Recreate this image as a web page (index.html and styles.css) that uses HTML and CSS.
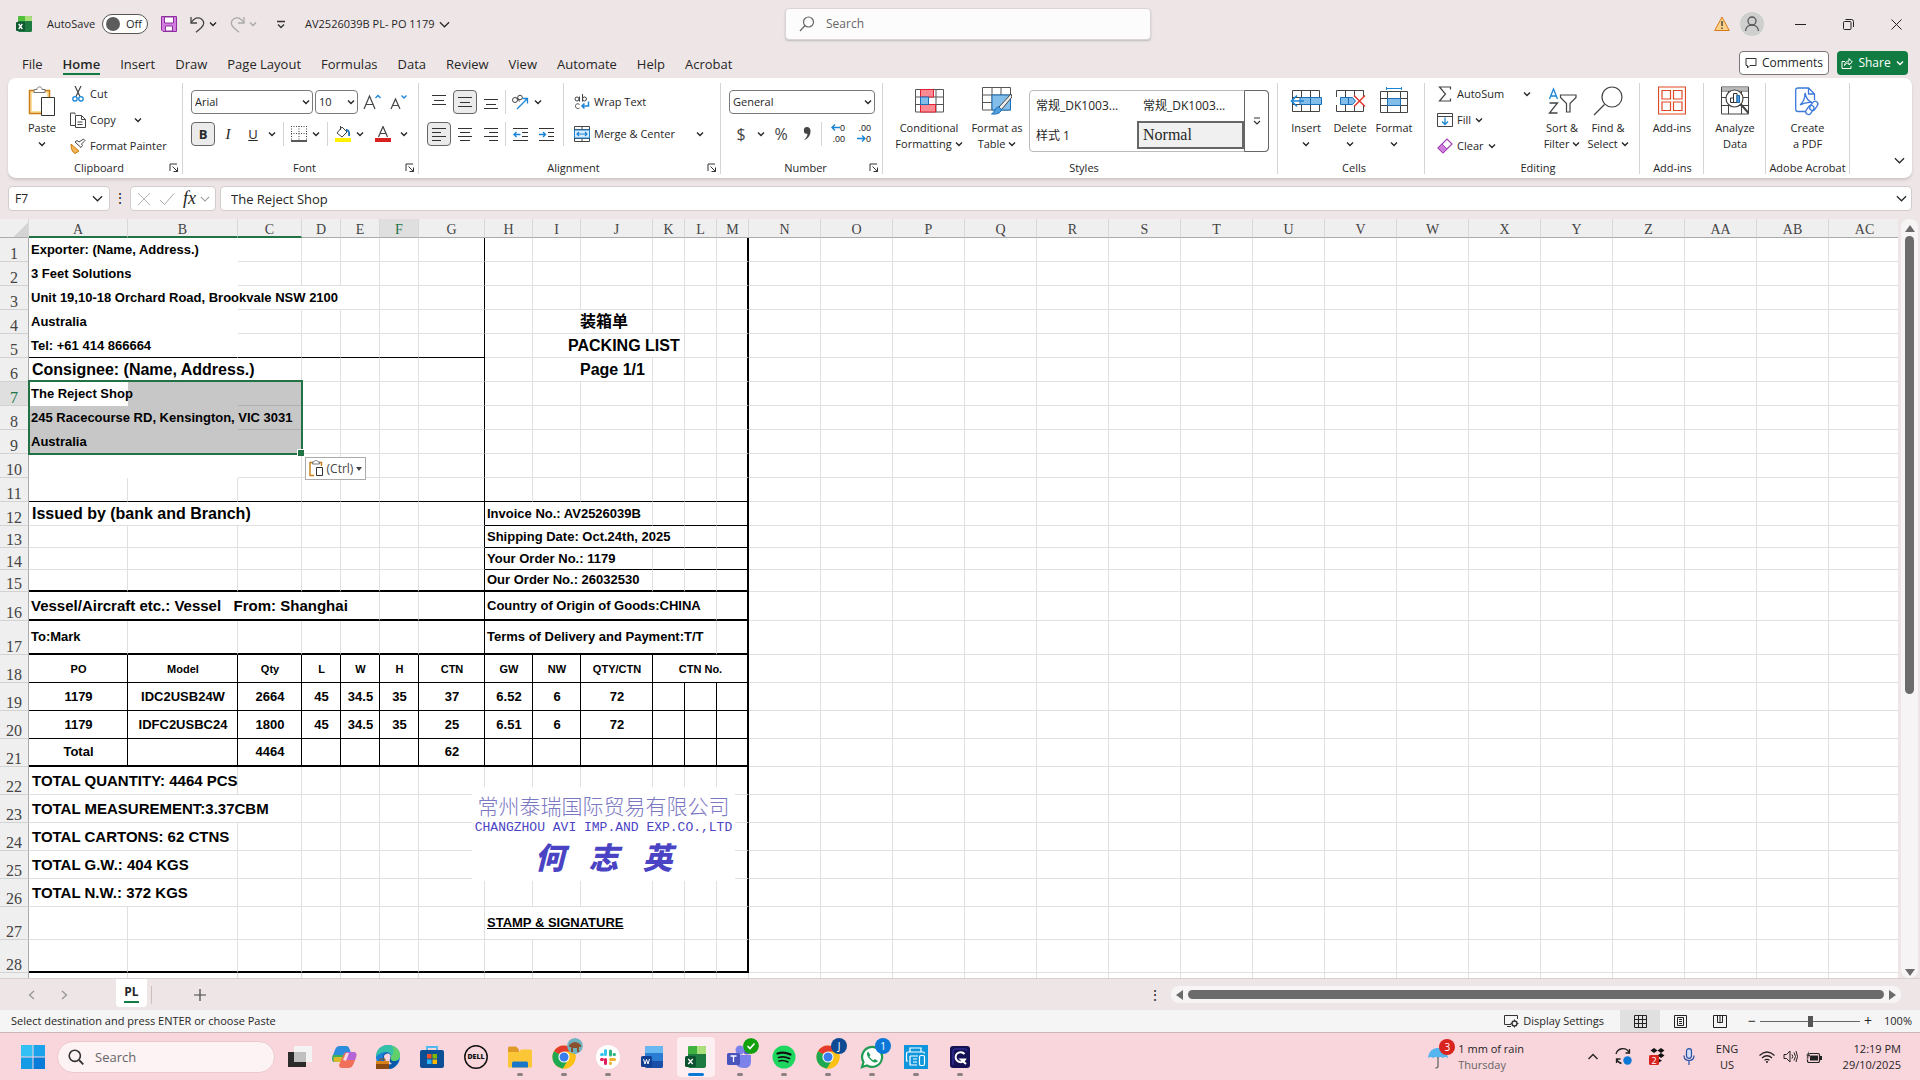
FILE: index.html
```html
<!DOCTYPE html>
<html lang="en">
<head>
<meta charset="utf-8">
<title>AV2526039B PL- PO 1179 - Excel</title>
<link rel="stylesheet" href="styles.css">
</head>
<body>
<svg class="defs" width="0" height="0" aria-hidden="true">
  <symbol id="chev" viewBox="0 0 8 8"><path d="M1 2.5l3 3 3-3" fill="none" stroke="currentColor" stroke-width="1.4"/></symbol>
  <symbol id="chevw" viewBox="0 0 12 12"><path d="M1 3.5l5 5 5-5" fill="none" stroke="currentColor" stroke-width="1.3"/></symbol>
  <symbol id="launch" viewBox="0 0 10 10"><path d="M1 8V1h7M3.500 3.500L8.500 8.500M8.500 4.500v4h-4" fill="none" stroke="#333"/></symbol>
  <symbol id="chrome" viewBox="0 0 24 24"><circle cx="12" cy="12" r="11.500" fill="#fbc116"/><path d="M12 12L2 6.200A11.500 11.500 0 0 1 22 6.300z" fill="#e33b2e"/><path d="M12 12L2 6.200A11.500 11.500 0 0 0 11 23.500l5.500-9z" fill="#1da851"/><path d="M12 6.500h10.100a11.500 11.500 0 0 1-11 17L16.500 14z" fill="#fbc116"/><circle cx="12" cy="12" r="5.600" fill="#fff"/><circle cx="12" cy="12" r="4.500" fill="#3b7ded"/></symbol>
</svg>

<header class="titlebar">
  <div class="quick">
    <svg width="16" height="16" viewBox="0 0 16 16"><rect x="2" y="0" width="14" height="16" rx="1.500" fill="#1d7b41"/><path d="M2 1.500Q2 0 3.500 0H9v5H2z" fill="#52c03d"/><path d="M9 0h5.500Q16 0 16 1.500V5H9z" fill="#a9e07a"/><rect y="6" width="9" height="9" rx="1" fill="#0f5a30"/><path d="M2.700 8l3.600 5M6.300 8l-3.600 5" stroke="#fff" stroke-width="1.300"/></svg>
    <div class="autosave"><label for="autosave">AutoSave</label><span class="toggle"><input type="checkbox" id="autosave"><span class="knob"></span><span>Off</span></span></div>
    <button class="plain" aria-label="Save"><svg width="16" height="16" viewBox="0 0 16 16"><path d="M.5.500h15v15H2l-1.500-1.500z" fill="#d27fe0" stroke="#8e2ea0"/><path d="M3.500 1h9v6h-9zM4.500 10h7v5h-7z" fill="#fff" stroke="#8e2ea0"/></svg></button>
    <button class="plain" aria-label="Undo"><svg width="15" height="17" viewBox="0 0 15 17"><path d="M1 1v6h6M1.200 6.500C4 2 8 .8 11.500 3c3 2.500 3 6-.5 9L6 16.300" fill="none" stroke="#444" stroke-width="1.300"/></svg><svg class="c8"><use href="#chev"/></svg></button>
    <button class="plain dim" aria-label="Redo"><svg width="15" height="17" viewBox="0 0 15 17"><path d="M14 1v6H8M13.800 6.500C11 2 7 .8 3.500 3c-3 2.500-3 6 .5 9L9 16.300" fill="none" stroke="#aaa" stroke-width="1.300"/></svg><svg class="c8"><use href="#chev"/></svg></button>
    <button class="plain cust" aria-label="Customize Quick Access Toolbar"><svg width="8" height="9" viewBox="0 0 8 9"><path d="M0 1.500h8M1 4.500l3 3 3-3" fill="none" stroke="#333" stroke-width="1.300"/></svg></button>
    <button class="plain">AV2526039B PL- PO 1179 <svg width="11" height="11"><use href="#chevw"/></svg></button>
  </div>
  <label class="search"><svg width="16" height="16" viewBox="0 0 16 16"><circle cx="9.500" cy="6" r="5" fill="none" stroke="#666" stroke-width="1.200"/><path d="M6 9.500L1 15" stroke="#666" stroke-width="1.200"/></svg><input type="text" placeholder="Search" aria-label="Search"></label>
  <div class="winctl">
    <svg width="16" height="16" viewBox="0 0 16 16"><path d="M8 1L15.300 14.500H.7z" fill="#fcd28a" stroke="#d97a16"/><path d="M8 5v5M8 11.500v1.500" stroke="#333" stroke-width="1.300"/></svg>
    <svg class="avatar" width="24" height="24" viewBox="0 0 24 24"><circle cx="12" cy="12" r="12" fill="#cfcfcf"/><circle cx="12" cy="9" r="4" fill="none" stroke="#555" stroke-width="1.300"/><path d="M5.500 19c.5-8 12.500-8 13 0" fill="none" stroke="#555" stroke-width="1.300"/></svg>
    <button class="win" aria-label="Minimize"><svg width="11" height="11"><path d="M0 5.500h11" stroke="#222"/></svg></button>
    <button class="win" aria-label="Restore"><svg width="11" height="11" fill="none" stroke="#222"><rect x=".5" y="2.500" width="7.500" height="8" rx="1"/><path d="M2.500.5h6q2 0 2 2V8"/></svg></button>
    <button class="win" aria-label="Close"><svg width="11" height="11"><path d="M.5.500l10 10M10.500.500l-10 10" stroke="#222"/></svg></button>
  </div>
</header>

<nav class="tabs">
  <a href="#">File</a><a href="#" class="on">Home</a><a href="#">Insert</a><a href="#">Draw</a><a href="#">Page Layout</a><a href="#">Formulas</a><a href="#">Data</a><a href="#">Review</a><a href="#">View</a><a href="#">Automate</a><a href="#">Help</a><a href="#">Acrobat</a>
  <button class="comments"><svg width="12" height="12" viewBox="0 0 12 12"><path d="M1 1.500h10v7H5l-2.500 2.500V8.500H1z" fill="none" stroke="#333"/></svg>Comments</button>
  <button class="share"><svg width="12" height="13" viewBox="0 0 12 13"><path d="M4 4.500H1v7h9V9M3.500 8.500c.5-3 2-4.500 4.500-4.500V1.500L11.300 5 8 8V6c-2 0-3.500.800-4.500 2.500z" fill="none" stroke="#fff"/></svg>Share<svg class="c8"><use href="#chev"/></svg></button>
</nav>

<section class="ribbon">
  <div class="group g-clip">
    <div class="tools">
      <button class="big"><svg width="28" height="30" viewBox="0 0 28 30"><path d="M1.500 4.500h20v23h-20z" fill="#fbdd9c" stroke="#c97d12" stroke-width="1.500"/><path d="M4 7h15v18H4z" fill="#fff"/><path d="M6 6.500v-3h3c0-3.500 5-3.500 5 0h3v3z" fill="#fff" stroke="#777"/><path d="M13.500 11.500h13v18h-13z" fill="#fff" stroke="#333"/></svg><span>Paste</span><svg class="c8"><use href="#chev"/></svg></button>
      <div class="rows3">
        <button class="row"><svg width="16" height="16" viewBox="0 0 16 16"><path d="M5 0l5 10.500M11 0L6 10.500" stroke="#444" stroke-width="1.200"/><circle cx="5" cy="12.800" r="2.200" fill="none" stroke="#1a85d6" stroke-width="1.300"/><circle cx="11" cy="12.800" r="2.200" fill="none" stroke="#1a85d6" stroke-width="1.300"/></svg>Cut</button>
        <button class="row"><svg width="16" height="16" viewBox="0 0 16 16"><path d="M5 2.500V1H.5v12.500H5M5.500 3.500h6l4 4v8h-10zM11.500 3.500v4h4M7.500 10h5M7.500 12.500h5" fill="none" stroke="#444"/></svg>Copy<svg class="c8 far"><use href="#chev"/></svg></button>
        <button class="row"><svg width="16" height="16" viewBox="0 0 16 16"><path d="M1 6l8 7-4 2.500c-3-1.500-4-5-4-9.500z" fill="#f5b65a" stroke="#c97d12"/><path d="M5 4l6 5.500 1.500-2-1-1.500L15 2.500 13.500 1 9 4 7 2.500z" fill="#fff" stroke="#444"/></svg>Format Painter</button>
      </div>
    </div>
    <div class="cap">Clipboard<svg class="l"><use href="#launch"/></svg></div>
  </div>

  <div class="group g-font">
    <div class="tools rows2">
      <div class="line">
        <span class="combo w-name"><select aria-label="Font"><option>Arial</option></select><svg class="c8"><use href="#chev"/></svg></span>
        <span class="combo w-size"><select aria-label="Font size"><option>10</option></select><svg class="c8"><use href="#chev"/></svg></span>
        <button class="ib" aria-label="Increase font size"><svg width="18" height="16" viewBox="0 0 18 16"><path d="M1 15L6.500 2 12 15M3 10.500h7" fill="none" stroke="#444" stroke-width="1.200"/><path d="M12.500 4l2.500-2.500L17.500 4" fill="none" stroke="#1a85d6" stroke-width="1.300"/></svg></button>
        <button class="ib" aria-label="Decrease font size"><svg width="18" height="16" viewBox="0 0 18 16"><path d="M2 15l4.500-10L11 15M3.500 11.500h6" fill="none" stroke="#444" stroke-width="1.200"/><path d="M12.500 1.500L15 4l2.500-2.500" fill="none" stroke="#1a85d6" stroke-width="1.300"/></svg></button>
      </div>
      <div class="line tight">
        <button class="ib on" aria-label="Bold"><b>B</b></button>
        <button class="ib" aria-label="Italic"><i>I</i></button>
        <button class="ib" aria-label="Underline"><u>U</u></button><svg class="c8 m"><use href="#chev"/></svg>
        <span class="sep"></span>
        <button class="ib s" aria-label="Borders"><svg width="16" height="16" viewBox="0 0 16 16"><path d="M.5 0v14M8 0v14M15.500 0v14M0 .5h16M0 7.500h16" stroke="#444" stroke-dasharray="1 1.500" fill="none"/><path d="M0 15h16" stroke="#222" stroke-width="1.500"/></svg></button><svg class="c8 m"><use href="#chev"/></svg>
        <span class="sep"></span>
        <button class="ib s" aria-label="Fill color"><svg width="16" height="16" viewBox="0 0 16 16"><path d="M7 1L2 7l5 4 5-5zM5.500 0v4" fill="none" stroke="#444"/><path d="M11 4c3 0 3.500 3 3 6" fill="none" stroke="#1a6fb8" stroke-width="1.800"/><path d="M0 12h16v4H0z" fill="#fff100"/></svg></button><svg class="c8 m"><use href="#chev"/></svg>
        <button class="ib wide" aria-label="Font color"><svg width="16" height="16" viewBox="0 0 16 16"><path d="M3.500 11L8 0.500 12.500 11M5 7.500h6" fill="none" stroke="#444" stroke-width="1.200"/><path d="M0 12h16v4H0z" fill="#d8201f"/></svg></button><svg class="c8"><use href="#chev"/></svg>
      </div>
    </div>
    <div class="cap">Font<svg class="l"><use href="#launch"/></svg></div>
  </div>

  <div class="group g-align">
    <div class="tools">
      <div class="rows2">
        <div class="line">
          <button class="ib" aria-label="Top align"><svg width="14" height="14"><path d="M0 .5h14M2 5.500h10M0 9.500h14" stroke="#333"/></svg></button>
          <button class="ib on" aria-label="Middle align"><svg width="14" height="14"><path d="M0 2.500h14M2 7.500h10M0 11.500h14" stroke="#333"/></svg></button>
          <button class="ib" aria-label="Bottom align"><svg width="14" height="14"><path d="M0 4.500h14M2 9.500h10M0 13.500h14" stroke="#333"/></svg></button>
          <span class="sep z"></span>
          <button class="ib" aria-label="Orientation"><svg width="18" height="16" viewBox="0 0 18 16"><circle cx="4" cy="6" r="2.500" fill="none" stroke="#444"/><path d="M6 3.500l2.500 4" stroke="#444"/><circle cx="9" cy="3.500" r="2.300" fill="none" stroke="#444"/><path d="M6 15L16 5M11.500 4.500H16.500V9.500" fill="none" stroke="#1a85d6" stroke-width="1.300"/></svg></button><svg class="c8"><use href="#chev"/></svg>
        </div>
        <div class="line">
          <button class="ib on" aria-label="Align left"><svg width="14" height="14"><path d="M0 1.500h14M0 5.500h9M0 9.500h14M0 13.500h9" stroke="#333"/></svg></button>
          <button class="ib" aria-label="Center"><svg width="14" height="14"><path d="M0 1.500h14M2 5.500h10M0 9.500h14M2 13.500h10" stroke="#333"/></svg></button>
          <button class="ib" aria-label="Align right"><svg width="14" height="14"><path d="M0 1.500h14M5 5.500h9M0 9.500h14M5 13.500h9" stroke="#333"/></svg></button>
          <span class="sep z"></span>
          <button class="ib" aria-label="Decrease indent"><svg width="15" height="14"><path d="M0 1.500h15M9 5.500h6M9 9.500h6M0 13.500h15" stroke="#333"/><path d="M7.500 7.500H1M3.500 5L1 7.500 3.500 10" fill="none" stroke="#1a85d6" stroke-width="1.400"/></svg></button>
          <button class="ib" aria-label="Increase indent"><svg width="15" height="14"><path d="M0 1.500h15M9 5.500h6M9 9.500h6M0 13.500h15" stroke="#333"/><path d="M0 7.500h6.500M4 5l2.500 2.500L4 10" fill="none" stroke="#1a85d6" stroke-width="1.400"/></svg></button>
        </div>
      </div>
      <div class="rows2 wrapcol">
        <button class="row"><svg width="16" height="16" viewBox="0 0 16 16"><g fill="none" stroke="#444"><circle cx="3" cy="5" r="2"/><path d="M5.500 2.500V7.500M8.500 0v7.500"/><circle cx="10.500" cy="5" r="2"/><path d="M5.500 10.500c-2-1.500-4-.5-4 1.500s2 3.500 4 2"/></g><path d="M14.500 7.500v4.500H8M10.500 9.500L8 12l2.500 2.500" fill="none" stroke="#1a85d6" stroke-width="1.500"/></svg>Wrap Text</button>
        <button class="row"><svg width="16" height="16" viewBox="0 0 16 16"><path d="M.5.500h15v15H.5zM.5 3.500h15M.5 12.500h15M8 .5v3M8 12.500v3" fill="#fff" stroke="#444"/><path d="M.5 4h15v8H.5z" fill="#d9ebfa" stroke="#1a85d6"/><path d="M3 8h10M5 6L3 8l2 2M11 6l2 2-2 2" fill="none" stroke="#1a85d6" stroke-width="1.200"/></svg>Merge &amp; Center<svg class="c8 end"><use href="#chev"/></svg></button>
      </div>
    </div>
    <div class="cap">Alignment<svg class="l"><use href="#launch"/></svg></div>
  </div>

  <div class="group g-num">
    <div class="tools rows2">
      <div class="line"><span class="combo w-num"><select aria-label="Number format"><option>General</option></select><svg class="c8"><use href="#chev"/></svg></span></div>
      <div class="line">
        <button class="ib sym">$</button><svg class="c8 m"><use href="#chev"/></svg>
        <button class="ib sym">%</button>
        <button class="ib" aria-label="Comma style"><svg width="8" height="14" viewBox="0 0 8 14"><path d="M4 0a3.400 3.400 0 1 0 .5 6.800C4.200 9.500 3 11.500.8 13.300 5.500 11.500 7.700 8 7.500 3.500 7.300 1.500 6 0 4 0z" fill="#444"/></svg></button>
        <span class="sep z"></span>
        <button class="ib dec" aria-label="Increase decimal"><span><svg width="9" height="7"><path d="M9 3.500H1M4 .5l-3 3 3 3" fill="none" stroke="#1a85d6" stroke-width="1.400"/></svg>0</span><span>.00</span></button>
        <button class="ib dec" aria-label="Decrease decimal"><span>.00</span><span><svg width="9" height="7"><path d="M0 3.500h8M5 .5l3 3-3 3" fill="none" stroke="#1a85d6" stroke-width="1.400"/></svg>0</span></button>
      </div>
    </div>
    <div class="cap">Number<svg class="l"><use href="#launch"/></svg></div>
  </div>

  <div class="group g-styles">
    <div class="tools">
      <button class="big w76"><svg width="29" height="24" viewBox="0 0 29 24"><path d="M.5.500h28v22.500H.5zM.5 8h28M.5 15.500h28M21 .5V23" fill="#fff" stroke="#555"/><path d="M5.500.500h13V8h-13zM5.500 15.500h15V23h-15z" fill="#fb8a93" stroke="#e02030"/><path d="M5.500 8h8v7.500h-8z" fill="#83bdea" stroke="#1a70b8"/></svg><span>Conditional<br>Formatting <svg class="c8"><use href="#chev"/></svg></span></button>
      <button class="big w60"><svg width="30" height="28" viewBox="0 0 30 28"><path d="M.5.500h28v22.500H.5zM.5 8h28M.5 15.500h28M10 .5V23M19 .5V23" fill="#fff" stroke="#555"/><path d="M10 8h18.500v15H10z" fill="#83bdea" stroke="#1a70b8"/><path d="M29 7L17 20l2.500 2.500L30 10z" fill="#eee" stroke="#444"/><path d="M16.500 19.500l3 3c-1 4-5 5-10 4.500 3-1 3-6 7-7.500z" fill="#4f9fe0" stroke="#1a70b8"/></svg><span>Format as<br>Table <svg class="c8"><use href="#chev"/></svg></span></button>
      <div class="gallery">
        <button>常规_DK1003...</button><button>常规_DK1003...</button>
        <button>样式 1</button><button class="cur">Normal</button>
        <button class="more" aria-label="More styles"><svg width="8" height="9" viewBox="0 0 8 9"><path d="M1 1h6M1 4l3 3 3-3" fill="none" stroke="#333" stroke-width="1.200"/></svg></button>
      </div>
    </div>
    <div class="cap">Styles</div>
  </div>

  <div class="group g-cells">
    <div class="tools">
      <button class="big w44"><svg width="32" height="28" viewBox="0 0 32 28"><path d="M2.500 3.500h27v21h-27zM11.500 3.500v21M20.500 3.500v21M2.500 10.500h27M2.500 17.500h27" fill="#fff" stroke="#444"/><path d="M10 10.500h21.500v7H10zM20.500 10.500v7" fill="#83bdea" stroke="#1a6fb8"/><path d="M14 14H1.500M7 8.500L1.500 14 7 19.500" fill="none" stroke="#1a85d6" stroke-width="1.600"/></svg><span>Insert</span><svg class="c8"><use href="#chev"/></svg></button>
      <button class="big w44"><svg width="32" height="28" viewBox="0 0 32 28"><path d="M2.500 3.500h27v21h-27zM11.500 3.500v21M20.500 3.500v21M2.500 10.500h27M2.500 17.500h27" fill="#fff" stroke="#444"/><path d="M0 10h32v8H0z" fill="#fff"/><path d="M6.500 10.500h12l3 3.500-3 3.500h-12zM14.500 10.500v7" fill="#83bdea" stroke="#1a6fb8"/><path d="M20 8.500l11 11M31 8.500l-11 11" stroke="#e0382c" stroke-width="1.500"/></svg><span>Delete</span><svg class="c8"><use href="#chev"/></svg></button>
      <button class="big w44"><svg width="30" height="28" viewBox="0 0 30 28"><path d="M1.500 4.500h27v21h-27zM8.500 4.500v21M21.500 4.500v21M1.500 11.500h27M1.500 18.500h27" fill="#fff" stroke="#444"/><path d="M8.500 11.500h13v7h-13z" fill="#83bdea" stroke="#1a6fb8"/><path d="M7.500 0v3M22.500 0v3M7.500 1.500h15" stroke="#1a85d6"/></svg><span>Format</span><svg class="c8"><use href="#chev"/></svg></button>
    </div>
    <div class="cap">Cells</div>
  </div>

  <div class="group g-edit">
    <div class="tools">
      <div class="rows3">
        <button class="row"><svg width="16" height="16" viewBox="0 0 16 16"><path d="M13.500 3.500V1h-11l6 7-6 7h11v-2.500" fill="none" stroke="#444" stroke-width="1.200"/></svg>AutoSum<svg class="c8 end"><use href="#chev"/></svg></button>
        <button class="row"><svg width="16" height="16" viewBox="0 0 16 16"><path d="M.5 1.500h15v13H.5zM.5 4.500h15" fill="none" stroke="#444"/><path d="M8 5.500v7M5 9.500l3 3 3-3" fill="none" stroke="#1a85d6" stroke-width="1.300"/></svg>Fill <svg class="c8"><use href="#chev"/></svg></button>
        <button class="row"><svg width="16" height="16" viewBox="0 0 16 16"><path d="M1 10L10 1l5 5-9 9z" fill="#fff" stroke="#a03db3" stroke-width="1.200"/><path d="M1 10l4-4 5 5-4 4z" fill="#cf7ede" stroke="#a03db3"/></svg>Clear <svg class="c8"><use href="#chev"/></svg></button>
      </div>
      <button class="big w46"><svg width="29" height="28" viewBox="0 0 29 28"><path d="M1.500 12L5.500 2l4 10M3 9h5" fill="none" stroke="#1a85d6" stroke-width="1.300"/><path d="M1.500 16h8l-8 10h8" fill="none" stroke="#444" stroke-width="1.300"/><path d="M12.500 8h15.500v2.500L22 16.500V25h-3.500v-8.500l-6-6z" fill="none" stroke="#444" stroke-width="1.200"/></svg><span>Sort &amp;<br>Filter <svg class="c8"><use href="#chev"/></svg></span></button>
      <button class="big w46"><svg width="30" height="30" viewBox="0 0 30 30"><circle cx="19" cy="11" r="10" fill="none" stroke="#444" stroke-width="1.200"/><path d="M11.500 18.500L1 29" stroke="#444" stroke-width="1.300"/></svg><span>Find &amp;<br>Select <svg class="c8"><use href="#chev"/></svg></span></button>
    </div>
    <div class="cap">Editing</div>
  </div>

  <div class="group g-add">
    <div class="tools"><button class="big w60"><svg width="28" height="29" viewBox="0 0 28 29"><path d="M.5.500h27v27H.5zM4 4h8.500v8.500H4zM15.500 4H24v8.500h-8.500zM4 15.500h8.500V24H4zM15.500 15.500H24V24h-8.500z" fill="none" stroke="#df4a22" stroke-width="1.200"/></svg><span>Add-ins</span></button></div>
    <div class="cap">Add-ins</div>
  </div>
  <div class="group g-ana">
    <div class="tools"><button class="big w60"><svg width="28" height="29" viewBox="0 0 28 29"><path d="M.5.500h27v27H.5zM.5 4.500h27M.5 11h27M.5 19h27M7.500 4.500v23M20.500 4.500v23" fill="#fff" stroke="#444"/><path d="M1 1h26v3H1z" fill="#bbb"/><circle cx="13.500" cy="12" r="8.500" fill="#fff" stroke="#444" stroke-width="1.200"/><path d="M20 18l7.500 8.500" stroke="#444" stroke-width="2"/><path d="M9.500 11.500h3V16h-3zM12.500 7h3.500v9h-3.500z" fill="#fff" stroke="#333"/><path d="M16 9h2.500v7H16z" fill="#4f9fe0" stroke="#1a6fb8"/></svg><span>Analyze<br>Data</span></button></div>
  </div>
  <div class="group g-acro">
    <div class="tools"><button class="big w76"><svg width="26" height="30" viewBox="0 0 26 30" fill="none" stroke="#3b78dc" stroke-width="1.300"><path d="M10 25.500H3q-2.300 0-2.300-2.300V4Q.7 2 3 2h10.500l6 6v6M13.500 2v6h6"/><path d="M5 19c4-3 5-8 5-12 1 5 3 8 7 9.500-4-.5-8 .3-12 2.500z"/><rect x="16" y="15" width="5.500" height="10" rx="2.700" transform="rotate(35 19 20)"/><rect x="12" y="19" width="5.500" height="10" rx="2.700" transform="rotate(35 15 24)"/></svg><span>Create<br>a PDF</span></button></div>
    <div class="cap">Adobe Acrobat</div>
  </div>
  <button class="collapse" aria-label="Collapse ribbon"><svg width="11" height="11"><use href="#chevw"/></svg></button>
</section>

<div class="formula">
  <label class="namebox"><input type="text" value="F7" aria-label="Name box"><svg width="11" height="11"><use href="#chevw"/></svg></label>
  <span class="dots">⋮</span>
  <div class="fx"><svg width="14" height="14"><path d="M1 1l12 12M13 1L1 13" stroke="#b5b5b5"/></svg><svg width="16" height="14"><path d="M1 8l4.500 4.500L15 1.500" fill="none" stroke="#aaa"/></svg><i>fx</i><svg class="g" width="10" height="10"><use href="#chevw"/></svg></div>
  <label class="fbar"><input type="text" value="The Reject Shop" aria-label="Formula bar"><svg width="11" height="11"><use href="#chevw"/></svg></label>
</div>

<main class="sheet">
<div class="grid">
<table>
<colgroup><col class="k29"><col class="k99"><col class="k110"><col class="k64"><col class="k39"><col class="k39"><col class="k39"><col class="k66"><col class="k48"><col class="k48"><col class="k72"><col class="k32"><col class="k32"><col class="k32"><col span="16" class="k72"></colgroup>
<thead><tr><th class="corner"><th class="s">A<th class="s">B<th class="s">C<th>D<th>E<th class="act">F<th>G<th>H<th>I<th>J<th>K<th>L<th>M<th>N<th>O<th>P<th>Q<th>R<th>S<th>T<th>U<th>V<th>W<th>X<th>Y<th>Z<th>AA<th>AB<th>AC</tr></thead>
<tbody>
<tr><th>1<td colspan="2" class="m">Exporter: (Name, Address.)<td><td><td><td><td class="R"><td><td><td><td><td><td class="E"><td colspan="16" class="f"></tr>
<tr><th>2<td colspan="2" class="m">3 Feet Solutions<td><td><td><td><td class="R"><td><td><td><td><td><td class="E"><td colspan="16" class="f"></tr>
<tr><th>3<td colspan="2" class="m">Unit 19,10-18 Orchard Road, Brookvale NSW 2100<td class="nr"><td class="nr"><td><td><td class="R"><td><td><td><td><td><td class="E"><td colspan="16" class="f"></tr>
<tr><th>4<td colspan="2" class="m">Australia<td><td><td><td><td class="R"><td><td colspan="2" class="t16 in48">装箱单<td><td><td class="E"><td colspan="16" class="f"></tr>
<tr class="b1"><th>5<td colspan="2" class="m">Tel: +61 414 866664<td><td><td><td><td class="R"><td class="w"><td colspan="3" class="w t16 in36">PACKING LIST<td class="w"><td class="w E"><td colspan="16" class="f"></tr>
<tr><th>6<td colspan="3" class="t16">Consignee: (Name, Address.)<td><td><td><td class="R"><td><td colspan="2" class="t16 in48">Page 1/1<td><td><td class="E"><td colspan="16" class="f"></tr>
<tr><th class="act">7<td class="m">The Reject Shop<td class="m x"><td class="x"><td><td><td><td class="R"><td><td><td><td><td><td class="E"><td colspan="16" class="f"></tr>
<tr><th>8<td colspan="2" class="m x">245 Racecourse RD, Kensington, VIC 3031<td class="x"><td><td><td><td class="R"><td><td><td><td><td><td class="E"><td colspan="16" class="f"></tr>
<tr><th>9<td colspan="2" class="m x">Australia<td class="x"><td><td><td><td class="R"><td><td><td><td><td><td class="E"><td colspan="16" class="f"></tr>
<tr><th>10<td colspan="2" class="m"><td><td><td><td><td class="R"><td><td><td><td><td><td class="E"><td colspan="16" class="f"></tr>
<tr class="b1"><th>11<td><td><td><td><td><td><td class="R"><td><td><td><td><td><td class="E"><td colspan="16" class="f"></tr>
<tr><th>12<td colspan="3" class="t16">Issued by (bank and Branch)<td><td><td><td class="R"><td colspan="3" class="k">Invoice No.: AV2526039B<td class="k"><td class="k"><td class="k E"><td colspan="16" class="f"></tr>
<tr class="h22"><th>13<td><td><td><td><td><td><td class="R"><td colspan="4" class="k">Shipping Date: Oct.24th, 2025<td class="k"><td class="k E"><td colspan="16" class="f"></tr>
<tr class="h22"><th>14<td><td><td><td><td><td><td class="R"><td colspan="3" class="k">Your Order No.: 1179<td class="k"><td class="k"><td class="k E"><td colspan="16" class="f"></tr>
<tr class="h22 b2"><th>15<td><td><td><td><td><td><td class="R"><td colspan="3">Our Order No.: 26032530<td><td><td class="E"><td colspan="16" class="f"></tr>
<tr class="h29 b2"><th>16<td colspan="5" class="t15 pre">Vessel/Aircraft etc.: Vessel   From: Shanghai<td><td class="R"><td colspan="5">Country of Origin of Goods:CHINA<td class="E"><td colspan="16" class="f"></tr>
<tr class="h34 b2"><th>17<td>To:Mark<td><td><td><td><td><td class="R"><td colspan="5">Terms of Delivery and Payment:T/T<td class="E"><td colspan="16" class="f"></tr>
<tr class="h28 q t11"><th>18<td>PO<td>Model<td>Qty<td>L<td>W<td>H<td>CTN<td>GW<td>NW<td>QTY/CTN<td colspan="3" class="E">CTN No.<td colspan="16" class="f"></tr>
<tr class="h28 q"><th>19<td>1179<td>IDC2USB24W<td>2664<td>45<td>34.5<td>35<td>37<td>6.52<td>6<td>72<td><td><td class="E"><td colspan="16" class="f"></tr>
<tr class="h28 q"><th>20<td>1179<td>IDFC2USBC24<td>1800<td>45<td>34.5<td>35<td>25<td>6.51<td>6<td>72<td><td><td class="E"><td colspan="16" class="f"></tr>
<tr class="h28 q b2"><th>21<td>Total<td><td>4464<td><td><td><td>62<td><td><td><td><td><td class="E"><td colspan="16" class="f"></tr>
<tr class="h28"><th>22<td colspan="2" class="t15">TOTAL QUANTITY: 4464 PCS<td><td><td><td><td><td><td><td><td><td><td class="E"><td colspan="16" class="f"></tr>
<tr class="h28"><th>23<td colspan="3" class="t15">TOTAL MEASUREMENT:3.37CBM<td><td><td><td><td><td><td><td><td><td class="E"><td colspan="16" class="f"></tr>
<tr class="h28"><th>24<td colspan="2" class="t15">TOTAL CARTONS: 62 CTNS<td><td><td><td><td><td><td><td><td><td><td class="E"><td colspan="16" class="f"></tr>
<tr class="h28"><th>25<td colspan="2" class="t15">TOTAL G.W.: 404 KGS<td><td><td><td><td><td><td><td><td><td><td class="E"><td colspan="16" class="f"></tr>
<tr class="h28"><th>26<td colspan="2" class="t15">TOTAL N.W.: 372 KGS<td><td><td><td><td><td><td><td><td><td><td class="E"><td colspan="16" class="f"></tr>
<tr class="h33"><th>27<td><td><td><td><td><td><td><td colspan="3"><u>STAMP &amp; SIGNATURE</u><td><td><td class="E"><td colspan="16" class="f"></tr>
<tr class="h33 b2"><th>28<td><td><td><td><td><td><td><td><td><td><td><td><td class="E"><td colspan="16" class="f"></tr>
<tr><th><td><td><td><td><td><td><td><td><td><td><td><td><td><td colspan="16" class="f"></tr>
</tbody>
</table>
<div class="selection"></div>
<button class="pasteopt"><svg width="15" height="17" viewBox="0 0 15 17"><path d="M5 15.500H1v-13h3M10 2.500h2.500V6" fill="none" stroke="#c97d12" stroke-width="1.400"/><path d="M3.500 4V2H5c0-2 4-2 4 0h1.500v2z" fill="#fff" stroke="#777"/><path d="M7.500 7.500h6v8h-6z" fill="#fff" stroke="#333"/></svg>(Ctrl)<svg width="6" height="4"><path d="M0 0h6L3 4z" fill="#444"/></svg></button>
<div class="stamp"><p class="cn">常州泰瑞国际贸易有限公司</p><p class="en">CHANGZHOU AVI IMP.AND EXP.CO.,LTD</p><p class="sig"><span>何</span><span>志</span><span>英</span></p></div>
</div>
<div class="vscroll"><svg width="10" height="7"><path d="M5 0l5 7H0z" fill="#6b6b6b"/></svg><div class="vthumb"></div><svg width="10" height="7"><path d="M5 7l5-7H0z" fill="#6b6b6b"/></svg></div>
</main>

<div class="sheettabs">
  <div class="arrows"><svg width="7" height="10"><path d="M6 1L1.500 5 6 9" fill="none" stroke="#999" stroke-width="1.400"/></svg><svg width="7" height="10"><path d="M1 1l4.500 4L1 9" fill="none" stroke="#999" stroke-width="1.400"/></svg></div>
  <a href="#" class="sheettab"><b>PL</b></a>
  <span class="tsep"></span>
  <button class="plain add" aria-label="New sheet"><svg width="12" height="12"><path d="M6 0v12M0 6h12" stroke="#444" stroke-width="1.200"/></svg></button>
  <span class="dots">⋮</span>
  <div class="hscroll"><svg width="7" height="10"><path d="M0 5l7-5v10z" fill="#6b6b6b"/></svg><div class="hthumb"></div><svg width="7" height="10"><path d="M7 5L0 0v10z" fill="#6b6b6b"/></svg></div>
</div>

<footer class="status">
  <span class="msg">Select destination and press ENTER or choose Paste</span>
  <button class="plain ds"><svg width="15" height="14" viewBox="0 0 15 14"><path d="M13.500 5V1.500H.5v9H7M3 12.500h4" fill="none" stroke="#333"/><circle cx="10.500" cy="9.500" r="2.500" fill="none" stroke="#333" stroke-width="1.400"/><path d="M10.500 5.500v8M6.500 9.500h8" stroke="#333" stroke-dasharray="1.500 5"/></svg>Display Settings</button>
  <button class="view on" aria-label="Normal view"><svg width="13" height="13" fill="none" stroke="#222"><path d="M.5.500h12v12H.5zM4.500.5v12M8.500.5v12M.5 4.500h12M.5 8.500h12"/></svg></button>
  <button class="view" aria-label="Page layout view"><svg width="13" height="13" fill="none" stroke="#222"><path d="M.5.500h12v12H.5zM3.500 2.500h6v8h-6zM5 4.500h3M5 6.500h3M5 8.500h3"/></svg></button>
  <button class="view" aria-label="Page break preview"><svg width="14" height="13" fill="none" stroke="#222"><path d="M.5.500h13v12H.5zM4.500.5v7h5v-7M7 .5v7"/></svg></button>
  <span class="zoom"><span>−</span><input type="range" min="0" max="100" value="50" aria-label="Zoom"><span>+</span></span>
  <span class="pct">100%</span>
</footer>

<footer class="taskbar">
  <button class="tb" aria-label="Start"><svg width="24" height="24" viewBox="0 0 24 24"><path d="M0 0h11.500v11.500H0z" fill="#33c1f5"/><path d="M12.500 0H24v11.500H12.500z" fill="#1ca2ea"/><path d="M0 12.500h11.500V24H0z" fill="#149be6"/><path d="M12.500 12.500H24V24H12.500z" fill="#0a7bd8"/></svg></button>
  <label class="tsearch"><svg width="16" height="16" viewBox="0 0 16 16"><circle cx="6.800" cy="6.800" r="5.600" fill="none" stroke="#333" stroke-width="1.600"/><path d="M11 11l4.300 4.300" stroke="#333" stroke-width="1.800"/></svg><input type="text" placeholder="Search" aria-label="Search Windows"></label>
  <div class="apps">
  <button class="tb" aria-label="Task view"><svg width="24" height="24"><path d="M0 7h18v15H0z" fill="#2b2b2b"/><path d="M6 1h18v16H6z" fill="#f3f3f3"/><path d="M6 7h12v10H6z" fill="#c0c0c0"/></svg></button>
  <button class="tb" aria-label="Copilot"><svg width="26" height="24" viewBox="0 0 26 24"><path d="M9 1h6c2 0 3 1 3.500 3L20 8h-5L10 17H4c-4 0-3-4-2-7l2-5c1-3 2-4 5-4z" fill="#2c8ddc"/><path d="M2 10h11l-3 7H4c-3 0-3.500-3-2-7z" fill="#3bb05c"/><path d="M3 12h10l-2 5H5c-3 0-3-2-2-5z" fill="#d8b92c"/><path d="M17 23h-6c-2 0-3-1-3-3l4-9c.5-2 2-4 4-4h6c3 0 4 2 3 5l-2 6c-1 3-3 5-6 5z" fill="#f0705c"/><path d="M16 7h6c3 0 4 2 3 5l-1 3H13l2-5z" fill="#b565d8"/><path d="M12 15l3-7h3l-3 8z" fill="#f9d5dc"/></svg></button>
  <button class="tb" aria-label="Edge"><svg width="26" height="24" viewBox="0 0 26 24"><circle cx="13" cy="12" r="12" fill="#1a7fd4"/><path d="M1 12C1 4 7 0 13 0c8 0 12 6 12 10 0 4-3 6-6 6-4 0-4-2-3-4 0-3-2-5-5-5-4 0-8 2-10 5z" fill="#35c1a8"/><path d="M17 1c6 2 8 6 8 9 0 4-3 6-6 6-3 0-4-2-3-4 3-3 3-7 1-11z" fill="#62d06a"/><path d="M8 12c0-3 2-4.500 4-4.500 3 0 4.500 2.500 4 4.500-1 2 0 4 3 4 2 0 4-.5 5-1.500C22 21 18 24 14 24c-4-2-6-7-6-12z" fill="#0c58a8"/><path d="M9 11c1-3 5-3.500 6.500-1 .5 1.500-.5 2.500-.5 4-1 2 0 4 2 5l-7 1z" fill="#f9d5dc"/><path d="M1 16h13v8H1z" fill="#d8821c"/><path d="M1 19h13v5H1z" fill="#8a4a12"/><path d="M5 16v-2h5v2" fill="none" stroke="#8a4a12"/></svg></button>
  <button class="tb" aria-label="Microsoft Store"><svg width="24" height="24"><path d="M7 6V2h10v4" fill="none" stroke="#4db8f0" stroke-width="1.800"/><rect x="0" y="5" width="24" height="18" rx="2" fill="#0c4f94"/><path d="M7 9h4.500v4.500H7z" fill="#f25022"/><path d="M12.500 9H17v4.500h-4.500z" fill="#7fba00"/><path d="M7 14.500h4.500V19H7z" fill="#29b2f5"/><path d="M12.500 14.500H17V19h-4.500z" fill="#ffb900"/></svg></button>
  <button class="tb" aria-label="Dell"><svg width="24" height="24"><circle cx="12" cy="12" r="11.200" fill="none" stroke="#111" stroke-width="1.500"/></svg><span class="dell">DELL</span></button>
  <button class="tb run" aria-label="File Explorer"><svg width="24" height="22"><path d="M0 2q0-1.500 1.500-1.500H8l3 3V8H0z" fill="#e09a28"/><path d="M0 6h11l2-2.500h9.500Q24 3.500 24 5v15q0 1.500-1.500 1.500h-21Q0 21.500 0 20z" fill="#fcc736"/><path d="M4 21.500V17q0-1.500 1.500-1.500h13Q20 15.500 20 17v4.500z" fill="#1a76c8"/></svg></button>
  <button class="tb run" aria-label="Chrome"><svg width="24" height="24"><use href="#chrome"/></svg><svg class="badge" width="16" height="16"><circle cx="8" cy="8" r="8" fill="#6fb2c0"/><path d="M2 7q6-6 12 0v2h-2v5h-2v-4H6v4H4V9H2z" fill="#8a5230"/></svg></button>
  <button class="tb run" aria-label="Slack"><svg width="24" height="24" viewBox="0 0 24 24"><circle cx="12" cy="12" r="12" fill="#fff"/><g stroke-width="3" stroke-linecap="round"><path d="M9.500 5.500v4M5.500 9.500h1" stroke="#36c5f0"/><path d="M14.500 6v4M18.500 9.500h-.5" stroke="#2eb67d"/><path d="M14.500 14.500h4M14.500 18.500v-.5" stroke="#ecb22e"/><path d="M9.500 14.500v4M5.500 14.500h1" stroke="#e01e5a"/></g></svg></button>
  <button class="tb" aria-label="Word"><svg width="22" height="24"><rect x="4" y="1" width="18" height="22" rx="2" fill="#2b7cd3"/><path d="M4 3q0-2 2-2h14q2 0 2 2v5H4z" fill="#69b8f2"/><path d="M4 16h18v5q0 2-2 2H6q-2 0-2-2z" fill="#1a4fa8"/><rect y="11" width="11" height="11" rx="1.500" fill="#123f91"/><path d="M2.500 14l1.500 5 1.500-4.500L7 19l1.500-5" fill="none" stroke="#fff"/></svg></button>
  <button class="tb active" aria-label="Excel"><svg width="22" height="24"><rect x="3" y="1" width="18" height="22" rx="2" fill="#1d7b41"/><path d="M3 3q0-2 2-2h7v8H3z" fill="#3fb13e"/><path d="M12 1h7q2 0 2 2v6h-9z" fill="#a9e07a"/><rect y="11" width="11" height="11" rx="1.500" fill="#0c5230"/><path d="M3.300 14l4.400 5M7.700 14l-4.400 5" stroke="#fff" stroke-width="1.300"/></svg></button>
  <button class="tb run" aria-label="Teams"><svg width="26" height="24"><circle cx="20" cy="6" r="3.500" fill="#5b5fc7"/><circle cx="13" cy="5" r="4.500" fill="#7b83eb"/><path d="M8 10h16v7a6 6 0 0 1-7 6q-9 0-9-8z" fill="#7b83eb"/><rect x="0" y="8" width="13" height="12" rx="1.500" fill="#4b53bc"/><path d="M3.500 11h6M6.500 11v6" stroke="#fff" stroke-width="1.300"/></svg><svg class="badge" width="16" height="16"><circle cx="8" cy="8" r="8" fill="#13a10e"/><path d="M4.500 8l2.500 2.500 4.500-5" fill="none" stroke="#fff" stroke-width="1.600"/></svg></button>
  <button class="tb run" aria-label="Spotify"><svg width="24" height="24"><circle cx="12" cy="12" r="11.500" fill="#1ed760"/><g fill="none" stroke="#111" stroke-linecap="round"><path d="M5.500 8.500c4-1.500 9-1 13 1" stroke-width="2.200"/><path d="M6.500 12.500c4-1.200 7.500-.7 11 1" stroke-width="1.800"/><path d="M7 16c3-1 6-.5 9 1" stroke-width="1.500"/></g></svg></button>
  <button class="tb run" aria-label="Chrome, profile J"><svg width="24" height="24"><use href="#chrome"/></svg><span class="badge navy">J</span></button>
  <button class="tb run" aria-label="WhatsApp"><svg width="24" height="24" viewBox="0 0 24 24"><path d="M2 22l1.500-5A10 10 0 1 1 7 20.500z" fill="#fff" stroke="#1f9d55" stroke-width="2.200"/><path d="M8 6.500c-2 1.500-1 5 2 8s6 4 8 1.500l-3-2-1.500 1.200c-2-.8-3.500-2.400-4-4L10.500 10z" fill="#1f9d55"/></svg><span class="badge blue">1</span></button>
  <button class="tb run" aria-label="HP Smart"><svg width="24" height="24"><path d="M0 0h24v24H0z" fill="#0f96dc"/><g fill="none" stroke="#fff" stroke-width="1.200"><path d="M6 7V3h11v4M4 16H2.500V8.500Q2.500 7 4 7h15q1.500 0 1.500 1.500M6 11h8M6 11v9h7M9 14h4M9 17h4"/><rect x="15.500" y="10.500" width="5" height="10" rx="1.500"/></g></svg></button>
  <button class="tb run" aria-label="Q"><svg width="20" height="22"><rect width="20" height="22" rx="3" fill="#141254"/><path d="M3 19V5q0-2 2-2h10q2 0 2 2" fill="none" stroke="#4038b0"/><path d="M14.500 8a5 5 0 1 0 .5 5.500h-4l5 4.500" fill="none" stroke="#fff" stroke-width="2"/></svg></button>
  </div>
  <div class="weather"><svg width="22" height="26" viewBox="0 0 22 26"><path d="M0 14C1 6 6 4 10 4s9 2 10 10q-3-2-5 0-2.500-2-5 0-2.500-2-5 0-2-2-5 0z" fill="#55b5ee"/><path d="M10 13v9q0 2-2.500 2" fill="none" stroke="#777" stroke-width="1.500"/></svg><span class="badge red">3</span><p>1 mm of rain<br><span>Thursday</span></p></div>
  <div class="tray">
    <svg width="10" height="7"><path d="M.5 6L5 1.500 9.500 6" fill="none" stroke="#222" stroke-width="1.300"/></svg>
    <svg width="17" height="17"><path d="M1 6a7 7 0 0 1 13-1.500M14.500 1v4h-4M1.500 15v-4h4M1.500 11a7 7 0 0 0 5 4.500" fill="none" stroke="#222" stroke-width="1.300"/><circle cx="12.500" cy="12.500" r="4.200" fill="#0b78d8"/></svg>
    <svg width="17" height="17"><path d="M5 0l3.500 2.500L5 5 1.500 2.500zM12 0l3.500 2.500L12 5 8.500 2.500zM12 5l3.500 2.500L12 10 8.500 7.500zM10 11l3 1.500-3 2z" fill="#111"/><rect y="7" width="10" height="10" rx="1.500" fill="#d8231f"/><text x="5" y="15.500" font-size="9" font-family="Open Sans" text-anchor="middle" fill="#fff">2</text></svg>
    <svg width="12" height="17"><rect x="3.500" y=".7" width="5" height="9.600" rx="2.500" fill="#d2dcf5" stroke="#2450a8" stroke-width="1.200"/><path d="M1 7.500q0 5 5 5t5-5M6 12.500V17" fill="none" stroke="#2450a8" stroke-width="1.200"/></svg>
    <p class="lang">ENG<br>US</p>
    <span class="net">
    <svg width="16" height="12" viewBox="0 0 16 12"><path d="M.5 4.500q7.500-7 15 0M3 7q5-4.500 10 0M5.500 9.300q2.500-2 5 0" fill="none" stroke="#222" stroke-width="1.200"/><circle cx="8" cy="11" r="1" fill="#222"/></svg>
    <svg width="15" height="13" viewBox="0 0 15 13"><path d="M1 4.500h2.500L7 1v11L3.500 8.500H1zM9 4.500q1.500 2 0 4M11 2.500q3 4 0 8M13 1q3 5.500 0 11" fill="none" stroke="#222"/></svg>
    <svg width="16" height="12" viewBox="0 0 16 12"><rect x="1.500" y="2.500" width="12" height="9" rx="1.500" fill="none" stroke="#222" stroke-width="1.200"/><path d="M4 4.500h8v5H4zM14 5h2v4h-2z" fill="#222"/><path d="M3 0L0 5h2.500L1.500 8.500 5 3.500H3z" fill="#222" stroke="#f9d5dc" stroke-width=".5"/></svg>
    </span>
    <p class="clock">12:19 PM<br>29/10/2025</p>
  </div>
</footer>
</body>
</html>
```
FILE: styles.css
```css
* { box-sizing: border-box; }
body {
  margin: 0; height: 100vh; display: flex; flex-direction: column; overflow: hidden;
  background: #eee6e6; color: #262626;
  font: 11px/16px "Open Sans", "Noto Sans", "Noto Sans CJK SC", sans-serif;
}
button, input, select { font: inherit; color: inherit; background: none; border: 0; padding: 0; margin: 0; outline: 0; }
button { display: flex; align-items: center; justify-content: center; white-space: nowrap; }
a { color: inherit; text-decoration: none; }
p { margin: 0; }
svg { flex: none; }
.defs { position: absolute; }
.c8 { width: 8px; height: 8px; }
input::placeholder { color: #666; opacity: 1; }

/* title bar */
.titlebar { display: grid; grid-template-columns: 1fr 366px 1fr; align-items: center; height: 48px; padding-left: 16px; flex: none; }
.quick { display: flex; align-items: center; gap: 13px; }
.autosave { display: flex; align-items: center; gap: 7px; padding-left: 2px; }
.toggle { display: flex; align-items: center; gap: 6px; width: 46px; height: 20px; padding-left: 3px; border: 1px solid #555; border-radius: 10px; background: #fff; }
.toggle input { appearance: none; position: absolute; }
.knob { width: 14px; height: 14px; border-radius: 7px; background: #5c5c5c; }
.plain { gap: 4px; }
.dim { color: #aaa; }
.cust { width: 22px; }
.search { display: flex; align-items: center; gap: 11px; height: 32px; padding: 0 13px; background: #fcfcfc; border: 1px solid #dcd4d4; border-radius: 4px; box-shadow: 0 1px 2px #bbb; font-size: 12px; }
.search input { flex: 1; }
.winctl { display: flex; align-items: center; justify-content: flex-end; gap: 10px; padding-right: 5px; }
.avatar { margin-right: 7px; }
.win { width: 38px; height: 32px; }

/* tabs */
.tabs { display: flex; align-items: center; height: 30px; flex: none; padding: 0 12px 0 22px; gap: 20px; font-size: 13px; }
.tabs a { height: 24px; line-height: 26px; border-bottom: 2px solid transparent; }
.tabs .on { font-weight: 600; border-color: #107c41; }
.comments, .share { height: 24px; border-radius: 4px; gap: 5px; font-size: 12px; }
.comments { margin-left: auto; width: 90px; border: 1px solid #777; background: #fff; }
.share { width: 71px; margin-left: -12px; background: #107c41; color: #fff; }

/* ribbon */
.ribbon { display: flex; flex: none; margin: 0 8px; height: 100px; padding: 5px 0 4px; background: #fff; border-radius: 8px; box-shadow: 0 2px 3px #cfc6c6; }
.group { display: flex; flex-direction: column; justify-content: space-between; flex: none; border-right: 1px solid #d4d4d4; padding-left: 8px; }
.g-clip { width: 175px; }
.g-font { width: 236px; }
.g-align { width: 302px; }
.g-num { width: 162px; }
.g-styles { width: 395px; }
.g-cells { width: 147px; padding-left: 6px; }
.g-edit { width: 215px; padding-left: 12px; }
.g-add { width: 64px; padding-left: 2px; }
.g-ana { width: 62px; padding-left: 1px; }
.g-acro { width: 84px; padding-left: 0; }
.g-acro .tools { justify-content: center; }
.tools { display: flex; }
.cap { display: flex; position: relative; align-items: center; justify-content: center; height: 12px; white-space: nowrap; }
.l { position: absolute; right: 3px; width: 10px; height: 10px; }
.big { flex-direction: column; justify-content: flex-start; padding-top: 3px; width: 52px; line-height: 16px; }
.big > svg:first-child { margin-bottom: 4px; height: 30px; }
.big > .c8 { margin-top: 4px; }
.w44 { width: 44px; }
.w46 { width: 46px; }
.w60 { width: 60px; }
.w76 { width: 76px; }
.rows3 { margin-top: -2px; }
.rows3 .row { height: 26px; }
.row { gap: 4px; justify-content: flex-start; width: 100%; }
.far { margin-left: 14px; }
.end { margin-left: auto; }
.g-clip .tools { gap: 2px; }
.rows2 { display: flex; flex-direction: column; gap: 8px; padding-top: 7px; }
.line { display: flex; align-items: center; gap: 2px; height: 24px; }
.tight { gap: 1px; }
.combo { display: grid; height: 24px; border: 1px solid #7a7a7a; border-radius: 4px; align-items: center; background: #fff; }
.combo > * { grid-area: 1 / 1; }
.combo select { appearance: none; width: 100%; height: 22px; padding-left: 3px; }
.combo .c8 { justify-self: end; margin-right: 2px; }
.w-name { width: 122px; }
.w-size { width: 43px; }
.w-num { width: 146px; }
.ib { width: 24px; height: 24px; font-size: 13px; border-radius: 4px; flex: none; }
.ib.s { width: 20px; }
.ib.wide { width: 32px; }
.ib i { font-family: "Liberation Serif", serif; font-size: 15px; }
.on.ib { background: #ebebeb; border: 1px solid #666; }
.m { margin: 0 2px; }
.sep { width: 1px; height: 24px; background: #d4d4d4; margin: 0 4px; }
.sep.z { margin: 0; }
.sym { font-size: 16px; color: #444; }
.dec { flex-direction: column; font: 9px/11px "Liberation Sans", sans-serif; align-items: flex-end; padding-right: 3px; }
.wrapcol { margin: 0 16px 0 5px; padding-left: 10px; border-left: 1px solid #d4d4d4; flex: 1; }
.wrapcol .row { height: 24px; }
.gallery { display: grid; grid-template: 30px 30px / 107px 107px 24px; height: 62px; margin: 7px 0 0 2px; border: 1px solid #bbb; border-radius: 4px; }
.gallery button { justify-content: flex-start; padding-left: 6px; font-size: 12px; overflow: hidden; }
.gallery .cur { font: 16px "Liberation Serif", serif; border: 2px solid #666; background: #f0f0f0; padding-left: 4px; margin: 0 0 2px; }
.gallery .more { grid-area: 1 / 3 / 3 / 4; justify-content: center; padding: 0; border: 1px solid #666; border-radius: 0 4px 4px 0; margin: -1px -1px -1px 0; }
.g-edit .rows3 { width: 94px; margin-right: 8px; }
.collapse { margin: 0 7px 8px auto; align-self: flex-end; }

/* formula bar */
.formula { display: flex; flex: none; height: 25px; margin: 8px 8px; }
.namebox, .fx, .fbar { display: flex; align-items: center; background: #fff; border: 1px solid #d3cccc; border-radius: 4px; font-size: 13px; }
.namebox { width: 102px; padding: 0 6px; font-size: 12px; }
.namebox input { width: 100%; }
.dots { width: 20px; text-align: center; font-size: 14px; line-height: 24px; }
.fx { width: 86px; padding: 0 3px 0 6px; gap: 8px; }
.fx i { font: italic 18px "Liberation Serif", serif; }
.fx .g { color: #999; margin-left: -4px; }
.fbar { flex: 1; margin-left: 4px; padding: 0 4px 0 10px; }
.fbar input { flex: 1; }

/* worksheet */
.sheet { flex: 1; display: flex; min-height: 0; }
.grid { position: relative; flex: 1; overflow: hidden; background: #fff; }
table { table-layout: fixed; width: 0; border-spacing: 0; font: bold 13px/16px "Liberation Sans", "Noto Sans CJK SC", sans-serif; color: #000; }
.k29 { width: 29px; } .k99 { width: 99px; } .k110 { width: 110px; } .k64 { width: 64px; } .k39 { width: 39px; }
.k66 { width: 66px; } .k48 { width: 48px; } .k72 { width: 72px; } .k32 { width: 32px; }
th, td { padding: 0; height: 24px; border: 0 solid #e0e0e0; border-width: 0 1px 1px 0; white-space: nowrap; }
th { background: #efefef; color: #444; font: 16px/14px "Liberation Serif", serif; }
tbody th { vertical-align: bottom; border-right-color: #ababab; border-bottom-color: #d2d2d2; }
thead th { height: 19px; font-size: 14px; vertical-align: bottom; border-color: #d8d8d8; border-bottom-color: #ababab; }
thead .s { border-bottom: 2px solid #217346; line-height: 13px; }
th.act { background: #dfdfdf; color: #217346; }
.corner { background: linear-gradient(135deg, transparent 68%, #d4d4d4 68%) #efefef; }
td { padding-left: 2px; }
.m { border-color: transparent; }
.nr { border-right-color: transparent; }
td.x { background: #c7c7c7; border-color: #b0b0b0; }
td.m.x { border-color: #c7c7c7; }
.t11 { font-size: 11px; }
.t15 { font-size: 15px; padding-left: 3px; }
.t16 { font-size: 16px; padding-left: 3px; }
.in36 { padding-left: 35px; }
.in48 { padding-left: 47px; }
.pre { white-space: pre; padding-left: 2px; }
.h22 > * { height: 22px; }
.h28 > * { height: 28px; }
.h29 > * { height: 29px; }
.h33 > * { height: 33px; }
.h34 > * { height: 34px; }
.R { border-right-color: #000; }
.E { border-right: 2px solid #000; }
.b1 > td { border-bottom-color: #000; }
.b2 > td { border-bottom: 2px solid #000; }
.k { border-bottom-color: #000; }
.b1 > td.w { border-bottom-color: #e0e0e0; }
.q > td { border-color: #000; text-align: center; padding-left: 1px; }
tr > td.f { border: 0 solid #e0e0e0; border-bottom-width: 1px; background: repeating-linear-gradient(to right, transparent 0 71px, #e0e0e0 71px 72px); }

/* floating objects on the worksheet */
.selection { position: absolute; left: 28px; top: 161px; width: 275px; height: 75px; border: 2px solid #217346; pointer-events: none; }
.selection::after { content: ""; position: absolute; right: -3px; bottom: -3px; width: 6px; height: 6px; background: #217346; border: 1px solid #fff; border-width: 1px 0 0 1px; }
.pasteopt { position: absolute; left: 305px; top: 238px; width: 61px; height: 23px; gap: 3px; background: #fff; border: 1px solid #ababab; font-size: 12px; color: #444; }
.stamp { position: absolute; left: 472px; top: 568px; width: 263px; height: 94px; background: #fff; color: #4a44c4; text-align: center; padding-top: 4px; white-space: nowrap; }
.stamp .cn { font: 300 21px/28px "Noto Sans CJK SC", sans-serif; color: #7b77c2; }
.stamp .en { font: 13px/18px "Liberation Mono", monospace; }
.stamp .sig { display: flex; justify-content: center; gap: 24px; font: italic 900 30px/38px "Noto Sans CJK SC", sans-serif; }

.vscroll { display: flex; flex-direction: column; align-items: center; justify-content: space-between; width: 17px; margin: 0 2px 0 3px; padding: 6px 0 2px; background: #f6f4f4; border-radius: 8px; }
.vthumb { width: 9px; flex: 0 0 61%; margin: 4px 0 auto; border-radius: 5px; background: #6b6b6b; }

/* sheet tabs */
.sheettabs { display: flex; align-items: center; flex: none; height: 32px; padding-right: 19px; border-top: 1px solid #d9d1d1; }
.arrows { display: flex; gap: 26px; padding-left: 28px; width: 116px; }
.sheettab { align-self: flex-start; width: 31px; height: 28px; background: #fff; border-radius: 0 0 4px 4px; font-size: 12px; text-align: center; padding-top: 3px; }
.sheettab b { display: inline-block; height: 21px; line-height: 19px; border-bottom: 2px solid #107c41; }
.tsep { width: 1px; height: 18px; margin-left: 4px; background: #c9c0c0; }
.add { margin: 0 auto 0 42px; }
.hscroll { display: flex; align-items: center; gap: 5px; flex: 0 0 730px; height: 17px; margin-left: 6px; padding: 0 5px; border-radius: 8px; background: #f6f4f4; }
.hthumb { flex: 1; height: 9px; border-radius: 5px; background: #6b6b6b; }

/* status bar */
.status { display: flex; align-items: center; flex: none; height: 22px; padding: 0 8px 0 11px; background: #f5f5f5; }
.msg { margin-right: auto; }
.ds { margin-right: 16px; }
.view { width: 40px; height: 22px; }
.view.on { background: #e0e0e0; }
.zoom { display: flex; align-items: center; gap: 4px; padding-left: 8px; font-size: 14px; }
.zoom input { appearance: none; width: 100px; height: 12px; background: linear-gradient(#666, #666) center / 100% 1px no-repeat; }
.zoom input::-webkit-slider-thumb { appearance: none; width: 5px; height: 11px; background: #555; }
.pct { margin-left: 12px; }

/* taskbar */
.taskbar { display: flex; align-items: center; flex: none; height: 48px; padding: 0 19px 0 11px; background: #f9d5dc; border-top: 1px solid #cdb4b8; }
.tb { position: relative; width: 44px; height: 40px; }
.tsearch { display: flex; align-items: center; gap: 11px; width: 218px; height: 32px; margin: 0 3px 0 2px; padding: 0 10px; border-radius: 16px; background: #fdf2f4; border: 1px solid #ecc9cf; font-size: 13px; }
.tsearch input { width: 100%; }
.apps { display: flex; }
.run::after, .active::after { content: ""; position: absolute; bottom: 1px; left: 19px; width: 6px; height: 3px; border-radius: 2px; background: #8a8083; }
.active { width: 38px; margin: 0 3px; border-radius: 4px; background: #fdeef1; }
.active::after { left: 11px; width: 16px; background: #0b78d8; }
.badge { position: absolute; top: 1px; right: 3px; width: 16px; height: 16px; border-radius: 8px; color: #fff; font-size: 10px; line-height: 16px; text-align: center; }
.navy { background: #0d4a94; }
.blue { background: #0b78d8; }
.red { background: #d8231f; top: -2px; left: 11px; }
.dell { position: absolute; font-size: 7px; font-weight: 800; color: #111; }
.weather { position: relative; display: flex; align-items: center; gap: 8px; margin-left: auto; margin-right: 64px; }
.weather p span { color: #666; }
.tray { display: flex; align-items: center; gap: 17px; }
.lang { text-align: center; width: 30px; }
.net { display: flex; align-items: center; gap: 8px; }
.clock { text-align: right; width: 62px; }
```
